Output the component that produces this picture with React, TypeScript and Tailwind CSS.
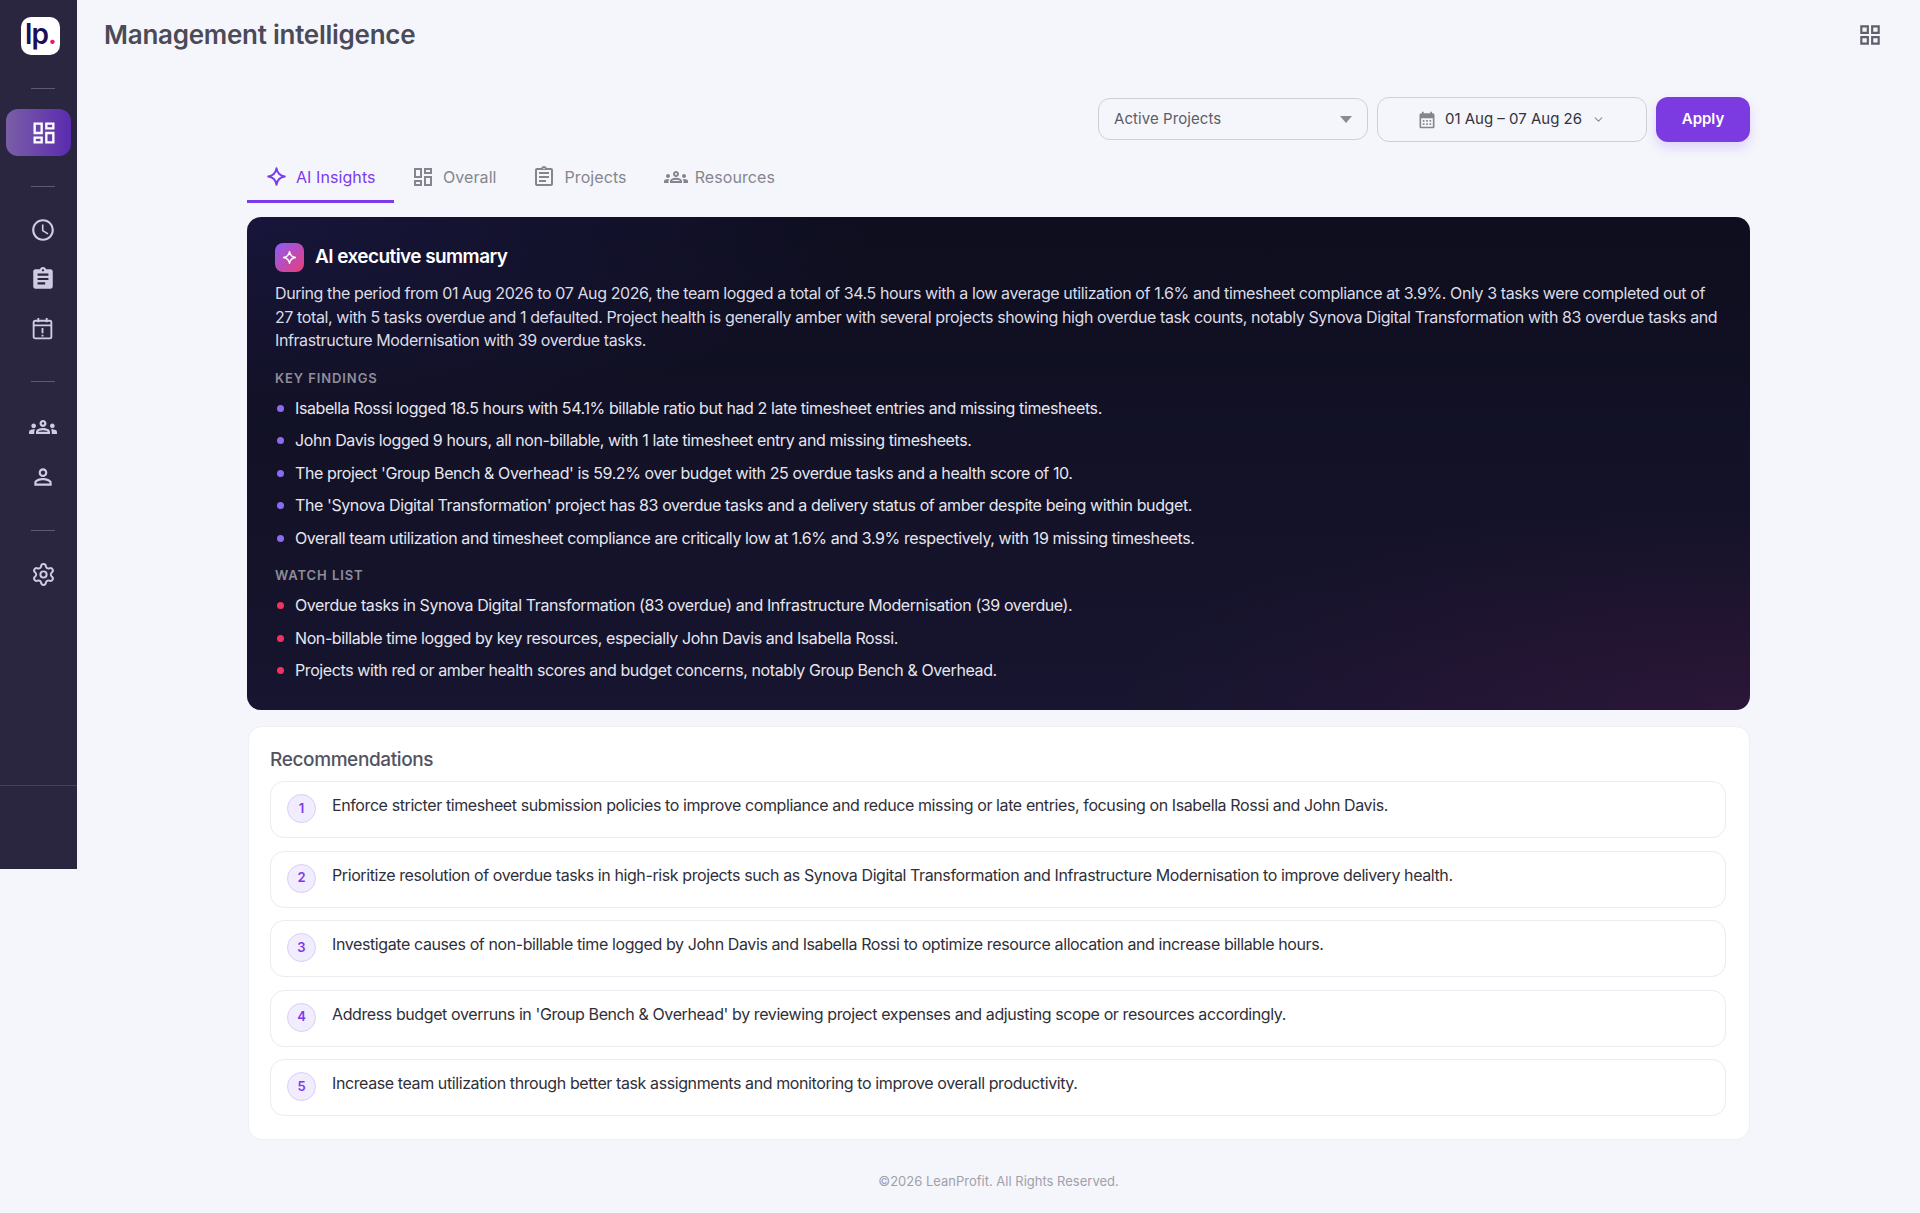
import React from "react";
import { ChevronDown, Settings } from "lucide-react";
import {
  MdOutlineDashboard,
  MdOutlineSchedule,
  MdAssignment,
  MdOutlineGroups,
  MdOutlinePermIdentity,
  MdOutlineAssignment,
  MdOutlineGridView,
  MdCalendarMonth,
} from "react-icons/md";

const font = { fontFamily: "Inter, 'Noto Sans', sans-serif" };

function Sparkle({ className }: { className?: string }) {
  return (
    <svg viewBox="0 0 24 24" className={className} fill="none" stroke="currentColor" strokeWidth="2.2" strokeLinejoin="round">
      <path d="M12 2.5 C12.8 8 16 11.2 21.5 12 C16 12.8 12.8 16 12 21.5 C11.2 16 8 12.8 2.5 12 C8 11.2 11.2 8 12 2.5 Z" />
    </svg>
  );
}

function CalendarAlert({ className }: { className?: string }) {
  return (
    <svg viewBox="0 0 24 24" className={className} fill="none" stroke="currentColor" strokeWidth="1.8">
      <rect x="3.5" y="4.5" width="17" height="17" rx="1.5" />
      <path d="M3.5 9h17M8 2v4M16 2v4" />
      <path d="M12 11.5v5M12 18v1.6" />
    </svg>
  );
}

function Divider() {
  return <div className="w-[24px] h-px bg-[#5c5a70] ml-[8px]" />;
}

function Sidebar() {
  const icon = "text-[#cfcbe2]";
  return (
    <aside className="w-[77px] h-[869px] shrink-0 bg-[#2a2640] flex flex-col items-center relative">
      <div className="w-[39px] h-[38px] mt-[17px] ml-[4px] rounded-[10px] bg-white flex items-center justify-center text-[28px] font-semibold leading-none text-[#1b0f57] tracking-[-0.03em]" style={font}>
        <span className="-mt-[4px]">lp</span>
        <span className="text-[#f0146e] -mt-[4px]">.</span>
      </div>
      <div className="mt-[33px]"><Divider /></div>
      <div className="mt-[20px] w-[65px] h-[47px] rounded-[12px] bg-[linear-gradient(90deg,#7a5ea6,#5a2bb0)] flex items-center justify-center pl-[10px] text-white">
        <MdOutlineDashboard size={28} />
      </div>
      <div className="mt-[30px]"><Divider /></div>
      <div className={`mt-[30px] ml-[8px] flex flex-col items-center ${icon}`}>
        <MdOutlineSchedule size={26} />
        <MdAssignment size={26} className="mt-[23px]" />
        <CalendarAlert className="w-[25px] h-[25px] mt-[24px]" />
      </div>
      <div className="mt-[40px]"><Divider /></div>
      <div className={`mt-[31px] ml-[8px] flex flex-col items-center ${icon}`}>
        <MdOutlineGroups size={28} />
        <MdOutlinePermIdentity size={26} className="mt-[23px]" />
      </div>
      <div className="mt-[40px]"><Divider /></div>
      <div className={`mt-[31px] ml-[9px] ${icon}`}>
        <Settings size={25} strokeWidth={1.9} />
      </div>
      <div className="mt-auto mb-[83px] w-full h-px bg-[#45425a]" />
    </aside>
  );
}

function Tab({ icon, label, active, className }: { icon: React.ReactNode; label: string; active?: boolean; className: string }) {
  return (
    <div className={`h-[50px] flex items-center border-b-[3px] ${active ? "text-[#7c3aed] border-[#7c3aed]" : "pt-[1px] text-[#85858f] border-transparent"} ${className}`}>
      {icon}
      <span className="text-[16px] leading-[20px] tracking-[0.005em]">{label}</span>
    </div>
  );
}

function Bullet({ text, color }: { text: string; color: string }) {
  return (
    <li className="flex items-center h-[23px] text-[16px] leading-[23px] tracking-[-0.025em] text-[#e6e6ef]">
      <span className={`w-[7px] h-[7px] rounded-full ml-[2px] mr-[11px] shrink-0 ${color}`} />
      {text}
    </li>
  );
}

const findings = [
  "Isabella Rossi logged 18.5 hours with 54.1% billable ratio but had 2 late timesheet entries and missing timesheets.",
  "John Davis logged 9 hours, all non-billable, with 1 late timesheet entry and missing timesheets.",
  "The project 'Group Bench & Overhead' is 59.2% over budget with 25 overdue tasks and a health score of 10.",
  "The 'Synova Digital Transformation' project has 83 overdue tasks and a delivery status of amber despite being within budget.",
  "Overall team utilization and timesheet compliance are critically low at 1.6% and 3.9% respectively, with 19 missing timesheets.",
];
const watch = [
  "Overdue tasks in Synova Digital Transformation (83 overdue) and Infrastructure Modernisation (39 overdue).",
  "Non-billable time logged by key resources, especially John Davis and Isabella Rossi.",
  "Projects with red or amber health scores and budget concerns, notably Group Bench & Overhead.",
];
const recs = [
  "Enforce stricter timesheet submission policies to improve compliance and reduce missing or late entries, focusing on Isabella Rossi and John Davis.",
  "Prioritize resolution of overdue tasks in high-risk projects such as Synova Digital Transformation and Infrastructure Modernisation to improve delivery health.",
  "Investigate causes of non-billable time logged by John Davis and Isabella Rossi to optimize resource allocation and increase billable hours.",
  "Address budget overruns in 'Group Bench & Overhead' by reviewing project expenses and adjusting scope or resources accordingly.",
  "Increase team utilization through better task assignments and monitoring to improve overall productivity.",
];

export default function App() {
  return (
    <div className="flex items-start w-full h-[1213px] bg-[#f5f6fb] overflow-hidden" style={font}>
      <Sidebar />
      <main className="flex-1 min-w-0">
        <header className="flex items-center justify-between pl-[27px] pr-[37px] pt-[19px] h-[51px]">
          <h1 className="text-[26px] leading-[32px] font-semibold text-[#4a4a58] tracking-[-0.01em]">Management intelligence</h1>
          <MdOutlineGridView size={26} className="text-[#5f5f6b]" />
        </header>

        <div className="ml-[170px] w-[1503px]">
          <div className="flex items-center justify-end gap-[9px] mt-[46px] h-[45px]">
            <div className="w-[270px] h-[42px] -mt-[1px] rounded-[12px] border border-[#cfcfd6] flex items-center justify-between pl-[15px] pr-[15px] text-[15px] tracking-[0.005em] text-[#5d5d68]">
              <span>Active Projects</span>
              <span className="w-0 h-0 border-l-[6px] border-r-[6px] border-t-[7px] border-l-transparent border-r-transparent border-t-[#8a8a92]" />
            </div>
            <div className="w-[270px] h-[45px] rounded-[12px] border border-[#cfcfd6] flex items-center justify-center gap-[8px] pr-[2px] text-[15px] text-[#33333d]">
              <MdCalendarMonth size={20} className="text-[#85858e]" />
              <span>01 Aug – 07 Aug 26</span>
              <ChevronDown size={13} className="text-[#8a8a92] ml-[2px]" />
            </div>
            <button className="w-[94px] h-[45px] rounded-[12px] bg-[#7c3be0] text-white text-[15px] font-semibold shadow-[0_6px_12px_rgba(124,58,237,0.18)]">Apply</button>
          </div>

          <div className="flex items-center mt-[11px]">
            <Tab active className="w-[147px] pl-[19px] gap-[9px]" label="AI Insights" icon={<Sparkle className="w-[21px] h-[21px]" />} />
            <Tab className="ml-[17px] gap-[8px]" label="Overall" icon={<MdOutlineDashboard size={24} />} />
            <Tab className="ml-[35px] gap-[9px]" label="Projects" icon={<MdOutlineAssignment size={24} />} />
            <Tab className="ml-[37px] gap-[7px]" label="Resources" icon={<MdOutlineGroups size={24} />} />
          </div>

          <section className="mt-[14px] h-[493px] rounded-[14px] px-[28px] pt-[26px] text-white bg-[radial-gradient(ellipse_at_100%_100%,rgba(180,30,110,0.13),transparent_30%),radial-gradient(ellipse_at_0%_0%,rgba(60,50,170,0.2),transparent_30%),linear-gradient(180deg,#0e0e1e,#17152f)]">
            <div className="flex items-center gap-[11px] h-[29px]">
              <span className="w-[29px] h-[29px] rounded-[8px] bg-[linear-gradient(135deg,#8b5cf6,#ec3d78)] flex items-center justify-center">
                <Sparkle className="w-[15px] h-[15px] text-white" />
              </span>
              <h2 className="text-[19px] leading-[24px] font-semibold tracking-[-0.03em] -mt-[1px]">AI executive summary</h2>
            </div>
            <p className="mt-[10px] text-[16px] leading-[23.5px] tracking-[-0.025em] text-[#dcdce6]">
              During the period from 01 Aug 2026 to 07 Aug 2026, the team logged a total of 34.5 hours with a low average utilization of 1.6% and timesheet compliance at 3.9%. Only 3 tasks were completed out of 27 total, with 5 tasks overdue and 1 defaulted. Project health is generally amber with several projects showing high overdue task counts, notably Synova Digital Transformation with 83 overdue tasks and Infrastructure Modernisation with 39 overdue tasks.
            </p>
            <h3 className="mt-[17px] text-[13px] leading-[16px] font-semibold tracking-[0.07em] text-[#8e8e9b]">KEY FINDINGS</h3>
            <ul className="mt-[11px] flex flex-col gap-[9.5px]">
              {findings.map((t) => <Bullet key={t} text={t} color="bg-[#8b6cf0]" />)}
            </ul>
            <h3 className="mt-[17px] text-[13px] leading-[16px] font-semibold tracking-[0.07em] text-[#8e8e9b]">WATCH LIST</h3>
            <ul className="mt-[11.5px] flex flex-col gap-[9.5px]">
              {watch.map((t) => <Bullet key={t} text={t} color="bg-[#f0345f]" />)}
            </ul>
          </section>

          <section className="mt-[16px] ml-px w-[1502px] h-[414px] bg-white rounded-[14px] border border-[#eeeef3] pl-[21px] pr-[23px] pt-[21px]">
            <h2 className="text-[19px] leading-[24px] font-medium text-[#53535f] tracking-[-0.02em]">Recommendations</h2>
            <div className="mt-[9px] flex flex-col gap-[12.5px]">
              {recs.map((t, i) => (
                <div key={t} className="h-[57px] rounded-[14px] border border-[#ebebf0] flex items-start pl-[16px] pt-[12px] gap-[16px]">
                  <span className="w-[29px] h-[29px] shrink-0 rounded-full bg-[#f1ecfe] border border-[#d9cff5] flex items-center justify-center text-[13px] font-semibold text-[#7c3aed]">{i + 1}</span>
                  <p className="text-[16px] leading-[23px] tracking-[-0.025em] text-[#2f2f3a]">{t}</p>
                </div>
              ))}
            </div>
          </section>

          <footer className="mt-[32px] text-center text-[13px] leading-[18px] text-[#a0a0aa]">©2026 LeanProfit. All Rights Reserved.</footer>
        </div>
      </main>
    </div>
  );
}
